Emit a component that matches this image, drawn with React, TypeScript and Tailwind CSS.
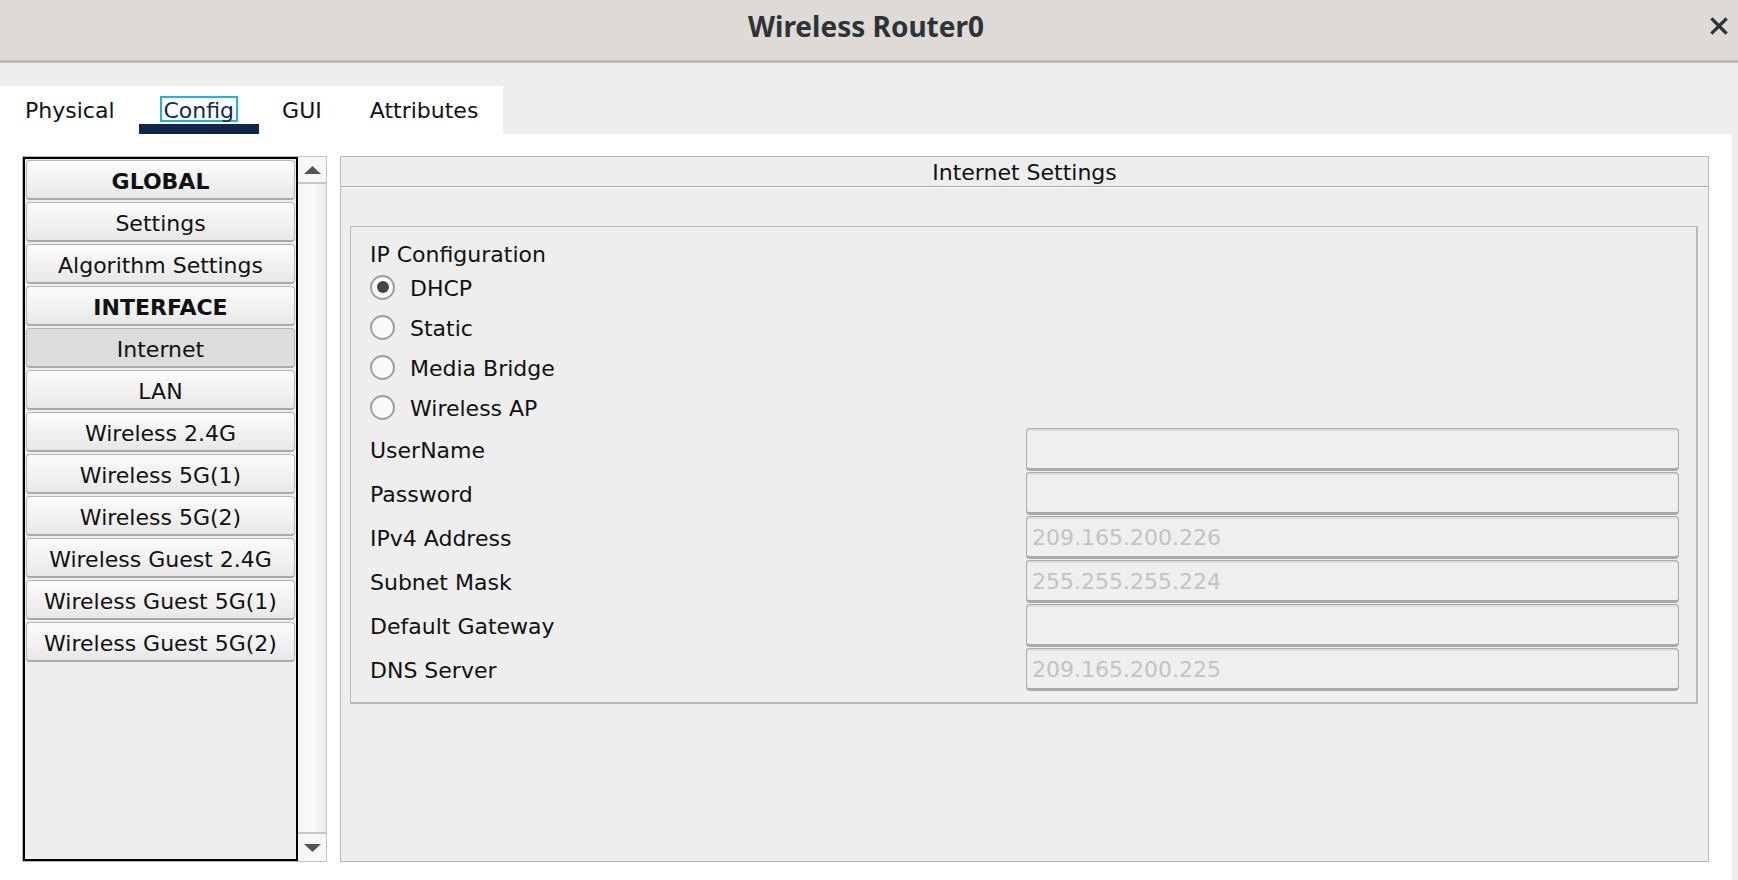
import React from "react";

const menu = [
  { label: "GLOBAL", bold: true },
  { label: "Settings" },
  { label: "Algorithm Settings" },
  { label: "INTERFACE", bold: true },
  { label: "Internet", active: true },
  { label: "LAN" },
  { label: "Wireless 2.4G" },
  { label: "Wireless 5G(1)" },
  { label: "Wireless 5G(2)" },
  { label: "Wireless Guest 2.4G" },
  { label: "Wireless Guest 5G(1)" },
  { label: "Wireless Guest 5G(2)" },
];

const modes = ["DHCP", "Static", "Media Bridge", "Wireless AP"];

const fields = [
  { label: "UserName", value: "" },
  { label: "Password", value: "" },
  { label: "IPv4 Address", value: "209.165.200.226" },
  { label: "Subnet Mask", value: "255.255.255.224" },
  { label: "Default Gateway", value: "" },
  { label: "DNS Server", value: "209.165.200.225" },
];

const tabs = [
  { label: "Physical", pad: "pl-[25px] pr-[24px]" },
  { label: "Config", pad: "px-[25px]" },
  { label: "GUI", pad: "px-[23px]" },
  { label: "Attributes", pad: "px-[25px]" },
];

function Radio({ checked }: { checked?: boolean }) {
  return (
    <span className="w-[25px] h-[25px] rounded-full border-[2px] border-[#a0a0a0] bg-[#fafafa] flex items-center justify-center">
      {checked && <span className="w-[12px] h-[12px] rounded-full bg-[#454545]" />}
    </span>
  );
}

export default function App() {
  return (
    <div className="w-[1738px] h-[880px] overflow-hidden bg-[#eeeeee] font-['DejaVu_Sans',sans-serif] text-[22px] text-[#111] flex flex-col">
      {/* title bar */}
      <header className="h-[63px] shrink-0 bg-[#dedad6] border-b-[3px] border-[#bdb7b3] grid grid-cols-[1fr_auto_1fr] items-center pb-[9px]">
        <div />
        <h1 className="font-['Noto_Sans',sans-serif] font-bold text-[28px] text-[#2e3436] leading-none -ml-[6px]">
          Wireless Router0
        </h1>
        <div className="flex justify-end pr-[10px]">
          <svg width="18" height="18" viewBox="0 0 18 18">
            <path d="M2.5 2.5 L15.5 15.5 M15.5 2.5 L2.5 15.5" stroke="#2e3436" strokeWidth="3.2" strokeLinecap="square" />
          </svg>
        </div>
      </header>

      {/* tabs */}
      <div className="h-[23px] shrink-0" />
      <nav className="h-[48px] shrink-0 flex">
        <div className="flex bg-white">
          {tabs.map((t) => {
            const on = t.label === "Config";
            return (
              <div key={t.label} className={"flex flex-col " + t.pad}>
                <div className="pt-[10px] h-[38px] flex items-start justify-center leading-[26px]">
                  {on ? (
                    <span className="inline-block h-[26px] -mx-[4px] border-2 border-[#1ab5e5] px-[2px] leading-[23px] pt-[1px] text-[#122a4c]">
                      {t.label}
                    </span>
                  ) : (
                    <span className="mt-[2px]">{t.label}</span>
                  )}
                </div>
                <div className={on ? "h-[10px] -mx-[25px] bg-[#0f284c]" : "h-[10px]"} />
              </div>
            );
          })}
        </div>
      </nav>

      {/* body */}
      <div className="flex-1 flex">
        <main className="flex-1 bg-white flex pl-[22px] pt-[22px]">
          {/* side menu */}
          <div className="w-[276px] h-[706px] border border-[#b8b8b8] border-r-0">
            <div className="h-full border-2 border-black bg-[#eeeeee] p-[1px] flex flex-col gap-[2px]">
              {menu.map((m) => (
                <div
                  key={m.label}
                  className={
                    "h-[40px] shrink-0 rounded-[4px] border border-[#b6b6b6] border-b-2 border-b-[#a9a9a9] flex items-center justify-center leading-none pt-[4px] " +
                    (m.active ? "bg-[#dcdcdc]" : "bg-gradient-to-b from-[#fcfcfc] to-[#e8e8e8]") +
                    (m.bold ? " font-bold" : "")
                  }
                >
                  {m.label}
                </div>
              ))}
            </div>
          </div>

          {/* scrollbar */}
          <div className="w-[29px] h-[706px] border border-l-0 border-[#c4c4c4] flex flex-col">
            <div className="h-[27px] border-b-2 border-[#c6c6c6] bg-[#f7f7f7] flex items-center justify-center">
              <svg width="17" height="8" viewBox="0 0 17 8">
                <path d="M0 8 L8.5 0 L17 8 Z" fill="#555" />
              </svg>
            </div>
            <div className="flex-1 bg-gradient-to-r from-[#f6f6f6] via-[#fbfbfb] to-[#e9e9e9]" />
            <div className="h-[29px] border-t-2 border-[#c6c6c6] bg-[#f7f7f7] flex items-center justify-center">
              <svg width="17" height="8" viewBox="0 0 17 8">
                <path d="M0 0 L17 0 L8.5 8 Z" fill="#555" />
              </svg>
            </div>
          </div>

          {/* settings panel */}
          <section className="ml-[13px] w-[1369px] h-[706px] border border-[#b8b8b8] bg-[#eeeeee] flex flex-col">
            <div className="h-[30px] shrink-0 flex items-center justify-center pt-[2px] border-b border-[#a8a8a8] shadow-[0_1px_0_#ffffff]">
              Internet Settings
            </div>
            <div className="mt-[39px] ml-[9px] mr-[10px] border border-[#b9b9b9] border-r-2 border-b-2 pl-[19px] pr-[17px] pt-[14px] pb-[11px]">
              <div className="leading-[26px] pt-[1px] h-[26px]">IP Configuration</div>
              {modes.map((m, i) => (
                <div key={m} className="h-[40px] flex items-center gap-[15px]">
                  <Radio checked={i === 0} />
                  <span className="pt-[2px]">{m}</span>
                </div>
              ))}
              <div className="grid grid-cols-[656px_1fr]">
                {fields.map((f) => (
                  <React.Fragment key={f.label}>
                    <div className="h-[44px] flex items-center pt-[2px]">{f.label}</div>
                    <div className="h-[44px] pt-[1px]">
                      <div className="h-[43px] rounded-[4px] border border-[#aaaaaa] border-b-[3px] bg-[#efefef] shadow-[inset_0_2px_0_#dedede] flex items-center pl-[5px] pt-[2px] text-[#c3c3c3]">
                        {f.value}
                      </div>
                    </div>
                  </React.Fragment>
                ))}
              </div>
            </div>
          </section>
        </main>
        <div className="w-[6px] bg-[#eeeeee]" />
      </div>
    </div>
  );
}
